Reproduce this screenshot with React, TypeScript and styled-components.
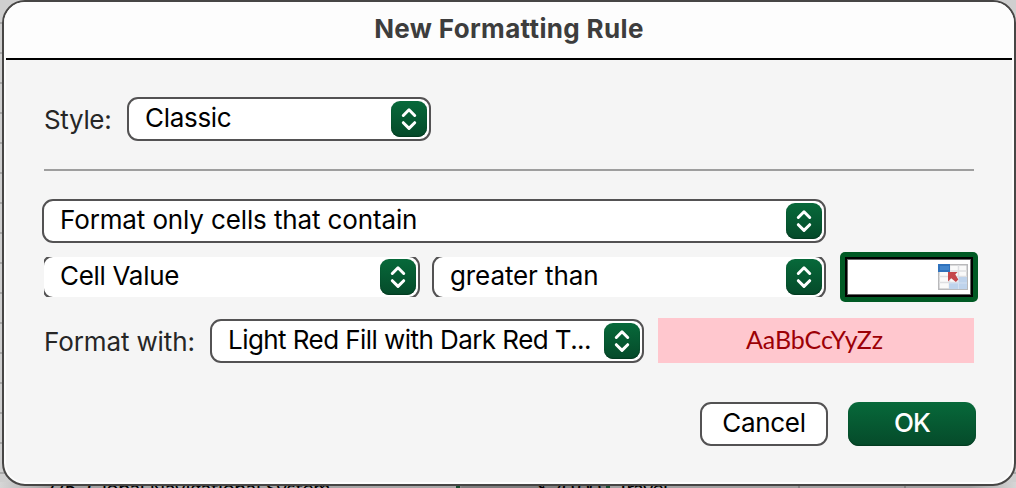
import React from "react";
import styled, { createGlobalStyle } from "styled-components";

const GlobalStyle = createGlobalStyle`
  * { box-sizing: border-box; }
  html, body { margin: 0; padding: 0; overflow: hidden; }
  body { font-family: Inter, "Liberation Sans", sans-serif; font-size: 26px; color: #000; }
`;

const Screen = styled.main`
  position: relative;
  width: 1016px;
  height: 488px;
  overflow: hidden;
  display: flex;
  background: repeating-linear-gradient(to bottom, transparent 0 22px, #a9a9a9 22px 24px, transparent 24px 30px), #cfcfcf;
`;

const SheetBottom = styled.div`
  position: absolute;
  left: 0;
  top: 482px;
  width: 1016px;
  height: 6px;
  display: flex;
  font: 400 21px/12px Lato, sans-serif;
  white-space: nowrap;
  background: linear-gradient(to right, #d6d6d6 0, #a2a2a2 50px, #a8a8a8 458px, #7f7f7f 462px, #7f7f7f 606px, #a2a2a2 610px, #a2a2a2 970px, #d6d6d6 1016px);
`;

const SheetCell = styled.span<{ $width: number; $pad?: number; $line?: string; $spacing?: number }>`
  flex: none;
  width: ${(p) => p.$width}px;
  padding-left: ${(p) => p.$pad ?? 0}px;
  border-right: ${(p) => (p.$line ? `${p.$line === "#17492e" ? 4 : 2}px solid ${p.$line}` : "none")};
  letter-spacing: ${(p) => p.$spacing ?? 0}px;
`;

const Dialog = styled.section`
  position: relative;
  display: flex;
  flex-direction: column;
  width: 1014px;
  height: 486px;
  margin-left: 2px;
  border: 2px solid #474645;
  border-radius: 23px;
  background: #f5f5f5;
  box-shadow: inset 0 0 0 2px #fdfdfd;
`;

const TitleBar = styled.header`
  flex: none;
  display: flex;
  justify-content: center;
  height: 56px;
  border-radius: 21px 21px 0 0;
  background: #fdfdfd;
`;

const Title = styled.h1`
  margin: 0;
  font-size: 26px;
  line-height: 54px;
  font-weight: 700;
  letter-spacing: 0.35px;
  color: #3d3d3d;
`;

const TitleRule = styled.div`
  flex: none;
  height: 2px;
  margin: 0 2px;
  background: #000;
`;

const Form = styled.div`
  display: flex;
  flex-direction: column;
  padding: 37px 38px 0 38px;
`;

const Row = styled.div<{ $top?: number; $indent?: number }>`
  display: flex;
  align-items: flex-start;
  margin-top: ${(p) => p.$top ?? 0}px;
  padding-left: ${(p) => p.$indent ?? 0}px;
`;

const Label = styled.label<{ $width: number; $spacing: number }>`
  flex: none;
  width: ${(p) => p.$width}px;
  height: 44px;
  line-height: 46px;
  letter-spacing: ${(p) => p.$spacing}px;
  white-space: nowrap;
  color: #262626;
`;

const Popup = styled.button<{ $width: number }>`
  flex: none;
  display: flex;
  justify-content: space-between;
  align-items: center;
  width: ${(p) => p.$width}px;
  height: 44px;
  padding: 0 2px 0 16px;
  border: 2px solid #535253;
  border-radius: 11px;
  background: #fff;
  font: inherit;
  color: #000;
  text-align: left;
`;

const PopupText = styled.span<{ $spacing: number }>`
  line-height: 38px;
  padding-bottom: 2px;
  letter-spacing: ${(p) => p.$spacing}px;
  white-space: nowrap;
`;

const Stepper = styled.span`
  flex: none;
  display: flex;
  width: 36px;
  height: 36px;
  border-radius: 9px;
  background: linear-gradient(#07693a, #054a2a);
  box-shadow: inset 0 -1px 1px #043b21;
`;

const ClipRow = styled.div`
  display: flex;
  flex: none;
  align-items: center;
  width: 782px;
  height: 40px;
  overflow: hidden;
`;

const ClipShift = styled.div`
  display: flex;
  gap: 12px;
  margin-left: -2px;
`;

const Divider = styled.div`
  height: 2px;
  margin: 28px 0 0;
  width: 930px;
  background: #9e9e9e;
`;

const FocusRing = styled.div`
  flex: none;
  width: 138px;
  height: 50px;
  margin: -5px 0 -5px 14px;
  padding: 5px;
  border-radius: 5px;
  background: #005a24;
`;

const RefField = styled.div`
  display: flex;
  align-items: center;
  justify-content: flex-end;
  height: 40px;
  padding-right: 3px;
  border: 2px solid #000;
  background: #fff;
  box-shadow: inset 0 0 0 1px #666;
`;

const Sample = styled.div`
  flex: none;
  width: 316px;
  height: 45px;
  margin: -1px 0 -1px 14px;
  padding-right: 3px;
  background: #ffc7ce;
  color: #9c0006;
  text-align: center;
  font: 400 25px/43px Lato, sans-serif;
  letter-spacing: -0.1px;
`;

const Actions = styled.footer`
  display: flex;
  justify-content: flex-end;
  gap: 20px;
  margin-top: 39px;
`;

const ActionButton = styled.button<{ $primary?: boolean }>`
  width: 128px;
  height: 44px;
  padding: 0 0 3px;
  border: ${(p) => (p.$primary ? "none" : "2px solid #535253")};
  border-radius: 11px;
  background: ${(p) => (p.$primary ? "linear-gradient(#07693a, #054a2a)" : "#fff")};
  box-shadow: ${(p) => (p.$primary ? "inset 0 -1px 1px #043b21" : "none")};
  font: ${(p) => (p.$primary ? 500 : 400)} 26px Inter, sans-serif;
  letter-spacing: ${(p) => (p.$primary ? -0.8 : -0.3)}px;
  color: ${(p) => (p.$primary ? "#fff" : "#000")};
`;

function Select({ width, spacing, children }: { width: number; spacing: number; children: string }) {
  return (
    <Popup $width={width}>
      <PopupText $spacing={spacing}>{children}</PopupText>
      <Stepper>
        <svg width="36" height="36" viewBox="0 0 36 36" fill="none" stroke="#fff" strokeWidth="3" strokeLinecap="round" strokeLinejoin="round">
          <path d="M12.3 14.5 18 8.8l5.7 5.7M12.3 21.7 18 27.4l5.7-5.7" />
        </svg>
      </Stepper>
    </Popup>
  );
}

function RangeIcon() {
  return (
    <svg width="30" height="26" viewBox="0 0 30 26">
      <rect width="30" height="26" fill="#b9b9bb" />
      <rect x="1.5" y="1.5" width="27" height="23" fill="#fafafa" />
      <path d="M1 12.5h28M1 18.5h28M12 7h17M11.5 1v24M20.5 1v24" stroke="#dedfe2" strokeWidth="1.5" />
      <rect width="12" height="8" fill="#2f72bd" />
      <rect x="2" y="2" width="9" height="4" fill="#4385cc" />
      <path d="M21 13h8v12H11v-6h10z" fill="#bed3ec" />
      <path d="M11 19h18M20.5 13v12" stroke="#d3e0f1" />
      <path d="M10 8h9.5l-2.2 2.6 3 5-2.4 2.4-4.7-3.8-3.2 3.3z" fill="#c5474b" />
    </svg>
  );
}

export default function App() {
  return (
    <>
      <GlobalStyle />
      <Screen>
        <SheetBottom>
          <SheetCell $width={82} $pad={43} $spacing={-1.5}>275</SheetCell>
          <SheetCell $width={374} $pad={5} $spacing={-0.3}>Global Navigational System</SheetCell>
          <SheetCell $width={4} $line="#17492e" />
          <SheetCell $width={91} $pad={77}>$</SheetCell>
          <SheetCell $width={59} $line="#17492e" $spacing={-0.9}>70.00</SheetCell>
          <SheetCell $width={190} $pad={7} $line="#858585" $spacing={-0.7}>Travel</SheetCell>
          <SheetCell $width={106} $line="#858585" />
        </SheetBottom>
        <Dialog>
          <TitleBar><Title>New Formatting Rule</Title></TitleBar>
          <TitleRule />
          <Form>
            <Row $indent={2}>
              <Label $width={83} $spacing={-0.35}>Style:</Label>
              <Select width={304} spacing={-0.3}>Classic</Select>
            </Row>
            <Row $indent={2}><Divider /></Row>
            <Row $top={28}><Select width={784} spacing={-0.13}>Format only cells that contain</Select></Row>
            <Row $top={14} $indent={2}>
              <ClipRow>
                <ClipShift>
                  <Select width={378} spacing={-0.3}>Cell Value</Select>
                  <Select width={394} spacing={-0.1}>greater than</Select>
                </ClipShift>
              </ClipRow>
              <FocusRing><RefField><RangeIcon /></RefField></FocusRing>
            </Row>
            <Row $top={22} $indent={2}>
              <Label $width={166} $spacing={-0.12}>Format with:</Label>
              <Select width={434} spacing={-0.56}>Light Red Fill with Dark Red T...</Select>
              <Sample>AaBbCcYyZz</Sample>
            </Row>
            <Actions>
              <ActionButton>Cancel</ActionButton>
              <ActionButton $primary>OK</ActionButton>
            </Actions>
          </Form>
        </Dialog>
      </Screen>
    </>
  );
}
